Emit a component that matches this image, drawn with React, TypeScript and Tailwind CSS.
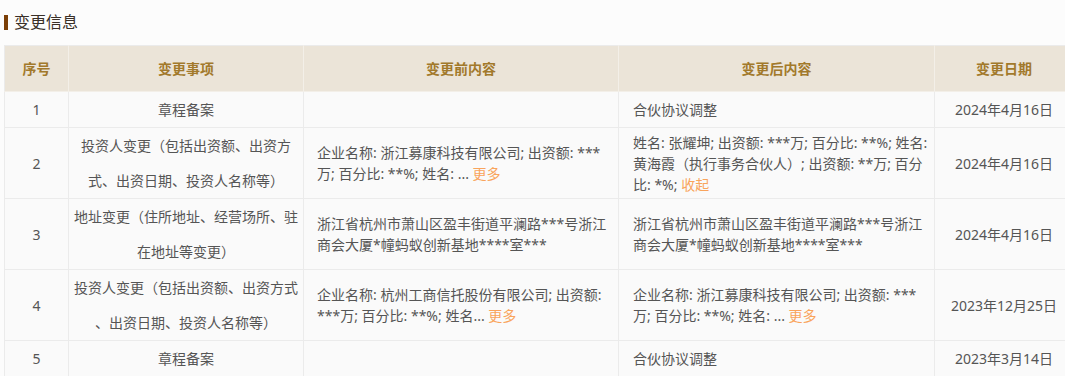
import React from "react";

const font = { fontFamily: '"Noto Sans", "Noto Sans CJK SC", sans-serif' };

function More({ label }: { label: string }) {
  return <span className="text-[#f9a45c]">{label}</span>;
}

export default function App() {
  const td = "border border-[#ebebeb] align-middle";
  return (
    <div className="w-[1065px] h-[376px] overflow-hidden bg-[#fcfcfc] text-[14px] text-[#555]" style={font}>
      <div className="flex items-center h-[22px] mt-[11px] pl-[4px]">
        <div className="w-[4px] h-[15px] bg-[#7b3f06]" />
        <span className="ml-[6px] text-[16px] text-[#3a3028] leading-[22px]">变更信息</span>
      </div>
      <table className="mt-[12px] ml-[4px] border-collapse table-fixed w-[1069px] bg-[#fafafa]">
        <colgroup>
          <col className="w-[64px]" />
          <col className="w-[235px]" />
          <col className="w-[315px]" />
          <col className="w-[316px]" />
          <col className="w-[139px]" />
        </colgroup>
        <thead>
          <tr className="h-[46px] bg-[#ebe4d8] text-[#a2792b] font-bold">
            <th className="border border-[#f3efe8] border-t-[#ebebeb] border-l-[#ebebeb]">序号</th>
            <th className="border border-[#f3efe8] border-t-[#ebebeb]">变更事项</th>
            <th className="border border-[#f3efe8] border-t-[#ebebeb]">变更前内容</th>
            <th className="border border-[#f3efe8] border-t-[#ebebeb]">变更后内容</th>
            <th className="border border-[#f3efe8] border-t-[#ebebeb]">变更日期</th>
          </tr>
        </thead>
        <tbody>
          <tr className="h-[36px]">
            <td className={`${td} text-center`}>1</td>
            <td className={`${td} text-center leading-[35px]`}>章程备案</td>
            <td className={`${td} px-[13px]`}></td>
            <td className={`${td} px-[14px] leading-[21px]`}>合伙协议调整</td>
            <td className={`${td} text-center`}>2024年4月16日</td>
          </tr>
          <tr className="h-[71px]">
            <td className={`${td} text-center`}>2</td>
            <td className={`${td} text-center leading-[35px] whitespace-nowrap`}>
              投资人变更（包括出资额、出资方<br />式、出资日期、投资人名称等）
            </td>
            <td className={`${td} px-[13px] leading-[21px] whitespace-nowrap`}>
              企业名称: 浙江募康科技有限公司; 出资额: ***<br />万; 百分比: **%; 姓名: ... <More label="更多" />
            </td>
            <td className={`${td} px-[14px] leading-[21px] whitespace-nowrap`}>
              姓名: 张耀坤; 出资额: ***万; 百分比: **%; 姓名:<br />黄海霞（执行事务合伙人）; 出资额: **万; 百分<br />比: *%; <More label="收起" />
            </td>
            <td className={`${td} text-center`}>2024年4月16日</td>
          </tr>
          <tr className="h-[71px]">
            <td className={`${td} text-center`}>3</td>
            <td className={`${td} text-center leading-[35px] whitespace-nowrap`}>
              地址变更（住所地址、经营场所、驻<br />在地址等变更）
            </td>
            <td className={`${td} px-[13px] leading-[21px] whitespace-nowrap`}>
              浙江省杭州市萧山区盈丰街道平澜路***号浙江<br />商会大厦*幢蚂蚁创新基地****室***
            </td>
            <td className={`${td} px-[14px] leading-[21px] whitespace-nowrap`}>
              浙江省杭州市萧山区盈丰街道平澜路***号浙江<br />商会大厦*幢蚂蚁创新基地****室***
            </td>
            <td className={`${td} text-center`}>2024年4月16日</td>
          </tr>
          <tr className="h-[71px]">
            <td className={`${td} text-center`}>4</td>
            <td className={`${td} text-center leading-[35px] whitespace-nowrap`}>
              投资人变更（包括出资额、出资方式<br />、出资日期、投资人名称等）
            </td>
            <td className={`${td} px-[13px] leading-[21px] whitespace-nowrap`}>
              企业名称: 杭州工商信托股份有限公司; 出资额:<br />***万; 百分比: **%; 姓名... <More label="更多" />
            </td>
            <td className={`${td} px-[14px] leading-[21px] whitespace-nowrap`}>
              企业名称: 浙江募康科技有限公司; 出资额: ***<br />万; 百分比: **%; 姓名: ... <More label="更多" />
            </td>
            <td className={`${td} text-center`}>2023年12月25日</td>
          </tr>
          <tr className="h-[36px]">
            <td className={`${td} text-center`}>5</td>
            <td className={`${td} text-center leading-[35px]`}>章程备案</td>
            <td className={`${td} px-[13px]`}></td>
            <td className={`${td} px-[14px] leading-[21px]`}>合伙协议调整</td>
            <td className={`${td} text-center`}>2023年3月14日</td>
          </tr>
        </tbody>
      </table>
    </div>
  );
}
